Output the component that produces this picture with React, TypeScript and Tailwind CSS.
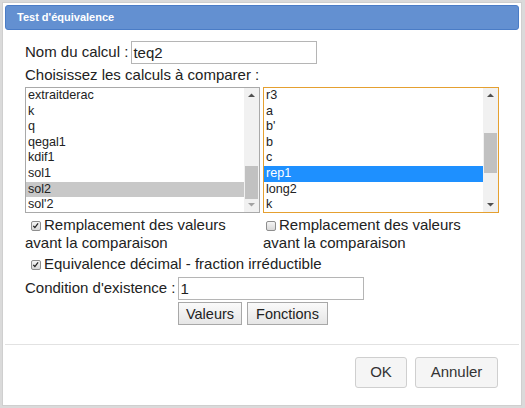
import React from "react";

const font = { fontFamily: '"Liberation Sans", Arial, sans-serif' };

function Check({ checked }: { checked: boolean }) {
  return (
    <span className="relative top-[1px] mr-[3px] inline-block h-[10px] w-[10px] rounded-[2px] border border-[#8e8e8e] bg-gradient-to-b from-[#f4f4f4] to-[#d8d8d8] align-baseline">
      {checked && (
        <svg viewBox="0 0 10 10" className="absolute left-0 top-0 h-[8px] w-[8px]">
          <path d="M1.6 4.8 L3.6 6.9 L7.6 1.8" fill="none" stroke="#222" strokeWidth="1.6" />
        </svg>
      )}
    </span>
  );
}

function Scrollbar({ thumbTop, thumbH, bottomDisabled }: { thumbTop: number; thumbH: number; bottomDisabled?: boolean }) {
  return (
    <div className="relative h-full w-[15px] shrink-0 bg-[#f1f1f1]">
      <svg viewBox="0 0 15 15" className="absolute left-0 top-0 h-[15px] w-[15px]">
        <path d="M4 9 L7.5 5.5 L11 9 Z" fill="#505050" />
      </svg>
      <div className="absolute left-[1px] w-[13px] bg-[#c1c1c1]" style={{ top: thumbTop, height: thumbH }} />
      <svg viewBox="0 0 15 15" className="absolute bottom-0 left-0 h-[15px] w-[15px]">
        <path d="M4 6 L7.5 9.5 L11 6 Z" fill={bottomDisabled ? "#a3a3a3" : "#505050"} />
      </svg>
    </div>
  );
}

function ListBox({
  items,
  selected,
  focused,
  thumbTop,
  thumbH,
  bottomDisabled,
  width,
}: {
  items: string[];
  selected: number;
  focused?: boolean;
  thumbTop: number;
  thumbH: number;
  bottomDisabled?: boolean;
  width: string;
}) {
  return (
    <div
      className={`flex h-[126px] ${width} border ${focused ? "border-[#e5a030]" : "border-[#a9a9a9]"} bg-white`}
    >
      <div className="flex-1 overflow-hidden">
        {items.map((it, i) => (
          <div
            key={i}
            className={`h-[15.6px] pl-[2px] text-[12.6px] leading-[15.6px] ${
              i === selected ? (focused ? "bg-[#1e90ff] text-white" : "bg-[#c8c8c8] text-[#222]") : "text-[#222]"
            }`}
          >
            {it}
          </div>
        ))}
      </div>
      <Scrollbar thumbTop={thumbTop} thumbH={thumbH} bottomDisabled={bottomDisabled} />
    </div>
  );
}

export default function App() {
  return (
    <div style={font} className="h-[408px] w-[525px] bg-[#dadada] pl-[2px] pr-[3px] pt-[2px] pb-[2px] text-[#222]">
      <div className="flex h-full flex-col border border-[#cfcfcf] bg-white p-[2px]">
        <div className="flex h-[25px] items-center rounded-[3px] border border-[#4a7cc6] bg-[#6390d1] pl-[11px] text-[11px] font-bold text-white">
          Test d'équivalence
        </div>

        <div className="pl-[20px] pt-[10px] text-[15px]">
          <div className="flex h-[24px] items-center">
            <span>Nom du calcul :</span>
            <input
              readOnly
              value="teq2"
              className="ml-[3px] h-[23px] w-[186px] border border-[#b5b5b5] px-[1px] text-[15px] text-[#222] outline-none"
            />
          </div>
          <div className="mt-[1px] h-[20px] leading-[20px]">Choisissez les calculs à comparer :</div>

          <div className="mt-[2px] flex gap-[3px]">
            <ListBox
              width="w-[235px]"
              items={["extraitderac", "k", "q", "qegal1", "kdif1", "sol1", "sol2", "sol'2"]}
              selected={6}
              thumbTop={78}
              thumbH={33}
              bottomDisabled
            />
            <ListBox
              width="w-[236px]"
              items={["r3", "a", "b'", "b", "c", "rep1", "long2", "k"]}
              selected={5}
              focused
              thumbTop={45}
              thumbH={40}
            />
          </div>

          <div className="mt-[3px] flex leading-[18px]">
            <div className="w-[238px]">
              <span className="ml-[6px]" />
              <Check checked />
              Remplacement des valeurs
              <br />
              avant la comparaison
            </div>
            <div className="w-[238px]">
              <span className="ml-[3px]" />
              <Check checked={false} />
              Remplacement des valeurs
              <br />
              avant la comparaison
            </div>
          </div>

          <div className="mt-[3px] leading-[18px]">
            <span className="ml-[6px]" />
            <Check checked />
            Equivalence décimal - fraction irréductible
          </div>

          <div className="mt-[4px] flex h-[23px] items-center">
            <span>Condition d'existence :</span>
            <input
              readOnly
              value="1"
              className="ml-[3px] h-[23px] w-[186px] border border-[#b5b5b5] px-[1px] text-[15px] text-[#222] outline-none"
            />
          </div>

          <div className="mt-[2px] flex gap-[5px] pl-[153px]">
            <button className="h-[23px] w-[64px] border border-[#a8a8a8] bg-gradient-to-b from-[#fafafa] to-[#e6e6e6] text-[14.5px] leading-[20px] text-[#222]">
              Valeurs
            </button>
            <button className="h-[23px] w-[81px] border border-[#a8a8a8] bg-gradient-to-b from-[#fafafa] to-[#e6e6e6] text-[14.5px] leading-[20px] text-[#222]">
              Fonctions
            </button>
          </div>
        </div>

        <div className="mt-[19px] border-t border-[#e2e2e2]" />

        <div className="flex justify-end gap-[8px] pr-[21px] pt-[12px]">
          <button className="h-[31px] w-[52px] rounded-[3px] border border-[#cfcfcf] bg-[#f5f5f5] text-[15px] text-[#333]">
            OK
          </button>
          <button className="h-[31px] w-[83px] rounded-[3px] border border-[#cfcfcf] bg-[#f5f5f5] text-[15px] text-[#333]">
            Annuler
          </button>
        </div>
      </div>
    </div>
  );
}
